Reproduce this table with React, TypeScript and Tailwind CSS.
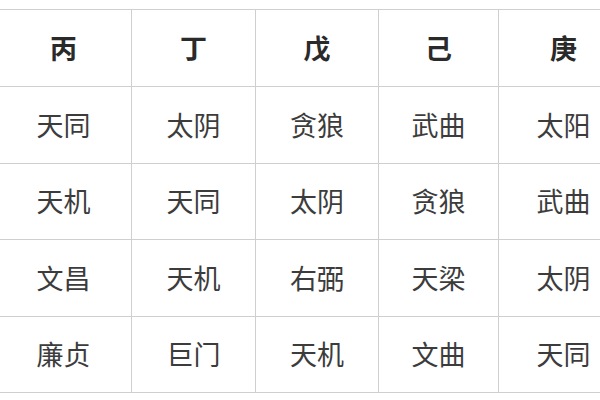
const header = ["丙", "丁", "戊", "己", "庚"];

const rows = [
  ["天同", "太阴", "贪狼", "武曲", "太阳"],
  ["天机", "天同", "太阴", "贪狼", "武曲"],
  ["文昌", "天机", "右弼", "天梁", "太阴"],
  ["廉贞", "巨门", "天机", "文曲", "天同"],
];

const cell =
  "flex items-center justify-center border-r border-b border-[#cfcfcf]";

export default function App() {
  return (
    <div className="w-[600px] h-[400px] overflow-hidden bg-white pt-[9px] font-['Noto_Sans_CJK_SC','Noto_Sans',sans-serif]">
      <div className="ml-[-5px] w-[633px] grid grid-cols-[136px_124px_123px_120px_130px] grid-rows-[77px_77px_76px_77px_76px] border-t border-l border-[#cfcfcf]">
        {header.map((h) => (
          <div key={h} className={`${cell} text-[27px] font-bold text-[#2a2a2a]`}>
            {h}
          </div>
        ))}
        {rows.map((row, i) =>
          row.map((v, j) => (
            <div key={`${i}-${j}`} className={`${cell} text-[27px] text-[#3c3c3c]`}>
              {v}
            </div>
          ))
        )}
      </div>
    </div>
  );
}
